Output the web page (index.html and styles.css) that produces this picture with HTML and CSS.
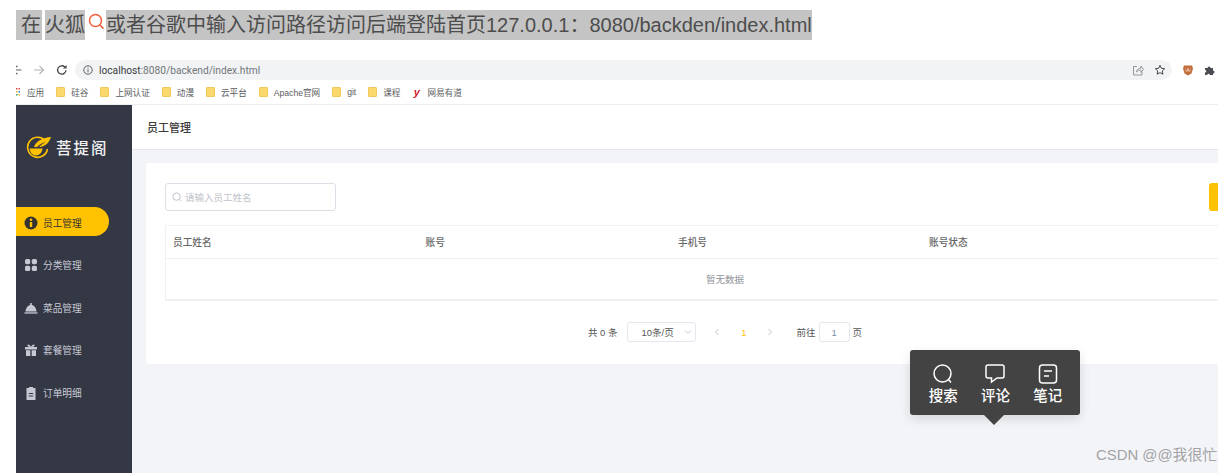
FILE: index.html
```html
<!DOCTYPE html>
<html lang="zh">
<head>
<meta charset="utf-8">
<title>员工管理</title>
<link rel="stylesheet" href="styles.css">
</head>
<body>
<div class="shot">
  <p class="note"><span class="hl first">在</span><span class="hl second">火狐</span><svg class="note-search" viewBox="0 0 18 18" width="18" height="18"><circle cx="8.5" cy="7.5" r="6" fill="none" stroke="#f0603c" stroke-width="1.5"/><path d="M12.8 11.8l3.6 3.8" stroke="#f0603c" stroke-width="1.6" fill="none"/></svg><span class="hl third">或者谷歌中输入访问路径访问后端登陆首页127.0.0.1：8080/backden/index.html</span></p>

  <div class="browser">
    <div class="toolbar">
      <div class="nav-btns">
        <svg class="back" viewBox="0 0 6 12" width="6" height="12"><path d="M0 6h5.5M0 3.2v0M0 8.8v0M0 3l1.5-1.2M0 9l1.5 1.2" stroke="#5f6368" stroke-width="1.2" fill="none"/></svg>
        <svg class="forward" viewBox="0 0 12 12" width="12" height="12"><path d="M1 6h9.5M6.5 2l4 4-4 4" stroke="#b4b6b9" stroke-width="1.2" fill="none"/></svg>
        <svg class="reload" viewBox="0 0 12 12" width="12" height="12"><path d="M10 6.2A4.2 4.2 0 1 1 8.8 3" stroke="#45484c" stroke-width="1.3" fill="none"/><path d="M10.6 1v3.6H7z" fill="#45484c"/></svg>
      </div>
      <div class="url">
        <svg class="info" viewBox="0 0 10 10" width="10" height="10"><circle cx="5" cy="5" r="4.2" fill="none" stroke="#5f6368" stroke-width="1"/><path d="M5 4.4v3M5 2.5v1" stroke="#5f6368" stroke-width="1"/></svg>
        <span class="url-text"><b>localhost</b>:8080/backend/index.html</span>
        <svg class="share" viewBox="0 0 12 12" width="12" height="12"><path d="M5 2.5H1.5v8.5h8.5V8M4.5 8c.4-2.6 2-3.8 4.5-3.8V2l2.5 3.4L9 8.4V6.2C7 6.2 5.600 6.700 4.500 8z" fill="none" stroke="#8a8d91" stroke-width=".9"/></svg>
        <svg class="star" viewBox="0 0 12 12" width="12" height="12"><path d="M6 1.300l1.400 3 3.300.4-2.400 2.200.6 3.300L6 8.600l-2.900 1.600.6-3.300L1.300 4.700l3.300-.4z" fill="none" stroke="#45484c" stroke-width="1"/></svg>
      </div>
      <svg class="lion" viewBox="0 0 12 12" width="12" height="12"><path d="M2 1.500h8l1 3-1.500 5L6 11.500 2.500 9.500 1 4.500z" fill="#c0703c"/><rect x="3.500" y="4" width="5" height="3.500" fill="#e9b48c"/><circle cx="4.500" cy="5" r=".8" fill="#c8392c"/><circle cx="7.500" cy="5" r=".8" fill="#c8392c"/></svg>
      <svg class="puzzle" viewBox="0 0 12 12" width="12" height="12"><path d="M1 4h2.500a1.500 1.500 0 1 1 3 0H9v2.500a1.500 1.500 0 1 1 0 3V11H5.800a1.300 1.300 0 1 0-2.600 0H1V8.500a1.300 1.300 0 1 0 0-2.600z" fill="#4a4d51"/></svg>
    </div>

    <div class="bookmarks">
      <div class="bm bm-apps">
        <svg viewBox="0 0 6 10" width="6" height="10"><rect width="1.500" height="1.500" y="1" fill="#e04b3c"/><rect x="2.500" y="1" width="1.500" height="1.500" fill="#e04b3c"/><rect y="4" width="1.500" height="1.500" fill="#f0b429"/><rect x="2.500" y="4" width="1.500" height="1.500" fill="#3b82e0"/><rect y="7" width="1.500" height="1.500" fill="#3fa45b"/><rect x="2.500" y="7" width="1.500" height="1.500" fill="#f0b429"/></svg>
        <span>应用</span>
      </div>
      <div class="bm"><i class="folder"></i><span>硅谷</span></div>
      <div class="bm"><i class="folder"></i><span>上网认证</span></div>
      <div class="bm"><i class="folder"></i><span>动漫</span></div>
      <div class="bm"><i class="folder"></i><span>云平台</span></div>
      <div class="bm"><i class="folder"></i><span>Apache官网</span></div>
      <div class="bm"><i class="folder"></i><span>git</span></div>
      <div class="bm"><i class="folder"></i><span>课程</span></div>
      <div class="bm"><b class="youdao">y</b><span>网易有道</span></div>
    </div>

    <div class="app">
      <aside class="sidebar">
        <div class="logo">
          <svg viewBox="0 0 28 24" width="28" height="24"><path d="M20 5.500A10 10 0 1 0 22.500 14" fill="none" stroke="#ffc200" stroke-width="1.600"/><path d="M9 12C11 6 18 2.500 26 2c-1.500 5-5 9.500-12 10 2-2 4-3.500 7-5.500-4 1.500-7 3.500-9 5.500z" fill="#ffc200"/><path d="M4.500 13.500h13c-.5 4-3 7-6.500 7s-6-3-6.500-7z" fill="#ffc200"/></svg>
          <span>菩提阁</span>
        </div>
        <nav class="menu">
          <a class="item active">
            <svg viewBox="0 0 14 14" width="14" height="14"><circle cx="7" cy="7" r="6.500" fill="#333"/><circle cx="7" cy="3.800" r="1.300" fill="#ffc200"/><path d="M5.800 6h2.400v5H5.800z" fill="#ffc200"/></svg>
            <span>员工管理</span>
          </a>
          <a class="item">
            <svg viewBox="0 0 14 14" width="14" height="14"><rect x="1" y="1" width="5.200" height="5.200" rx="1.600"/><rect x="7.800" y="1" width="5.200" height="5.200" rx="1.600"/><rect x="1" y="7.800" width="5.200" height="5.200" rx="1.600"/><rect x="7.800" y="7.800" width="5.200" height="5.200" rx="1.600"/></svg>
            <span>分类管理</span>
          </a>
          <a class="item">
            <svg viewBox="0 0 14 14" width="14" height="14"><path d="M1.500 10.500C2 6.500 4 4 7 4s5 2.500 5.500 6.500z"/><circle cx="7" cy="3" r="1.100"/><rect x="0.500" y="11.300" width="13" height="1.300"/></svg>
            <span>菜品管理</span>
          </a>
          <a class="item">
            <svg viewBox="0 0 14 14" width="14" height="14"><rect x="1" y="4" width="12" height="2.500"/><path d="M2 7.300h4.300V13H2zM7.700 7.300H12V13H7.700z"/><path d="M7 4C5.500 1 3 1 3.500 2.800 3.800 3.700 5.500 4 7 4c1.500 0 3.200-.3 3.500-1.200C11 1 8.500 1 7 4z"/></svg>
            <span>套餐管理</span>
          </a>
          <a class="item">
            <svg viewBox="0 0 14 14" width="14" height="14"><path fill-rule="evenodd" d="M2.500 2H5V1h4v1h2.500v12h-9zM4.800 7h4.400v1H4.800zm0 2.500h4.400v1H4.800z"/></svg>
            <span>订单明细</span>
          </a>
        </nav>
      </aside>

      <main class="main">
        <header class="page-head">员工管理</header>
        <section class="card">
          <div class="filters">
            <div class="search">
              <svg viewBox="0 0 10 10" width="10" height="10"><circle cx="4.600" cy="4.600" r="3.700" fill="none" stroke="#c0c4cc" stroke-width="1"/><path d="M7.300 7.300l2 2" stroke="#c0c4cc" stroke-width="1"/></svg>
              <span>请输入员工姓名</span>
            </div>
            <div class="add-btn"></div>
          </div>
          <div class="table">
            <div class="row head">
              <span>员工姓名</span><span>账号</span><span>手机号</span><span>账号状态</span>
            </div>
            <div class="empty">暂无数据</div>
          </div>
          <div class="pager">
            <span class="total">共 0 条</span>
            <div class="select"><span>10条/页</span><svg viewBox="0 0 8 8" width="8" height="8"><path d="M1 2.500l3 3 3-3" fill="none" stroke="#c0c4cc" stroke-width=".9"/></svg></div>
            <svg class="arrow" viewBox="0 0 8 8" width="8" height="8"><path d="M5.500 1l-3 3 3 3" fill="none" stroke="#c0c4cc" stroke-width="1"/></svg>
            <span class="current">1</span>
            <svg class="arrow" viewBox="0 0 8 8" width="8" height="8"><path d="M2.500 1l3 3-3 3" fill="none" stroke="#c0c4cc" stroke-width="1"/></svg>
            <span class="goto">前往</span>
            <div class="page-input">1</div>
            <span>页</span>
          </div>
        </section>
      </main>
    </div>

    <div class="popup">
      <div class="pop-item">
        <svg viewBox="0 0 22 22" width="22" height="22"><circle cx="10.500" cy="10.500" r="8.500" fill="none" stroke="#fff" stroke-width="1.500"/><path d="M16.500 16.500l2.500 3" stroke="#fff" stroke-width="1.500"/></svg>
        <span>搜索</span>
      </div>
      <div class="pop-item">
        <svg viewBox="0 0 22 22" width="22" height="22"><path d="M4 2h14a2 2 0 0 1 2 2v9a2 2 0 0 1-2 2h-5l-5.500 4v-4H4a2 2 0 0 1-2-2V4a2 2 0 0 1 2-2z" fill="none" stroke="#fff" stroke-width="1.500"/></svg>
        <span>评论</span>
      </div>
      <div class="pop-item">
        <svg viewBox="0 0 22 22" width="22" height="22"><rect x="2.500" y="2" width="17" height="18" rx="3" fill="none" stroke="#fff" stroke-width="1.500"/><path d="M7 8h8M7 13h5" stroke="#fff" stroke-width="1.500"/></svg>
        <span>笔记</span>
      </div>
    </div>
    <div class="watermark">CSDN @@我很忙</div>
  </div>
</div>
</body>
</html>
```
FILE: styles.css
```css
* { box-sizing: border-box; }
html, body { margin: 0; height: 100%; background: #fff; overflow: hidden; }
body { font-family: "Liberation Sans", "Noto Sans CJK SC", sans-serif; color: #333; }
.shot { width: 1218px; height: 473px; padding: 10px 0 0 16px; overflow: hidden; position: relative; }

.note { margin: 0; height: 30px; display: flex; align-items: center; font-size: 20px; line-height: 30px; color: #4d4d4d; white-space: nowrap; }
.hl { background: #c4c4c4; height: 30px; display: block; }
.first { width: 26px; padding-left: 5px; }
.second { width: 40px; margin-left: 3px; }
.note-search { margin: 0 1px 7px 2px; flex: none; }
.third { width: 706px; }

.browser { margin-top: 20px; width: 1202px; }
.toolbar { height: 20px; display: flex; align-items: center; }
.nav-btns { width: 59px; display: flex; align-items: center; flex: none; }
.back { margin-right: 11px; }
.forward { margin-right: 11px; }
.url { width: 1097px; height: 20px; background: #f1f3f4; border-radius: 10px; display: flex; align-items: center; padding-left: 8px; flex: none; }
.info { margin-right: 6px; flex: none; }
.url-text { font-family: Roboto, "Liberation Sans", sans-serif; font-size: 10.2px; color: #72767a; white-space: nowrap; }
.url-text b { font-weight: 400; color: #3a3c3f; }
.share { margin-left: auto; }
.star { margin: 0 6px 0 10px; }
.lion { margin-left: 10px; }
.puzzle { margin-left: 10px; }

.bookmarks { height: 24px; padding-top: 4px; padding-bottom: 4px; display: flex; align-items: center; gap: 12px; font-size: 8.6px; color: #5a5c60; white-space: nowrap; }
.bm { display: flex; align-items: center; gap: 6px; }
.bm-apps { gap: 5px; }
.folder { width: 9px; height: 10px; background: #fbd96e; border: 1px solid #f3c85a; border-radius: 1px; display: block; }
.youdao { width: 9px; font-family: "Liberation Sans", sans-serif; font-style: italic; font-size: 11px; line-height: 10px; color: #d3202e; text-align: center; }

.app { height: 369px; display: flex; border-top: 1px solid #eceef0; }
.sidebar { width: 116px; background: #343744; flex: none; padding-top: 28px; }
.logo { height: 28px; padding-left: 9px; display: flex; align-items: center; gap: 3px; }
.logo span { font-family: "Noto Sans CJK SC", sans-serif; font-size: 15.5px; font-weight: 500; letter-spacing: 2px; color: #f2f2f2; }
.menu { margin-top: 46px; display: flex; flex-direction: column; gap: 13.500px; width: 93px; }
.item { height: 29px; display: flex; align-items: center; gap: 5px; padding-left: 8px; padding-top: 2px; font-size: 9.7px; color: #c6c9d4; border-radius: 0 15px 15px 0; white-space: nowrap; }
.item svg { fill: #c6c9d4; flex: none; }
.item.active { background: #ffc200; color: #333; }

.main { flex: 1; min-width: 0; background: #f3f4f7; overflow: hidden; }
.page-head { height: 45px; padding-left: 15px; background: #fff; border-bottom: 1px solid #e6e7ea; display: flex; align-items: center; font-size: 11px; font-weight: 500; color: #3c3c3c; }
.card { width: 1158px; height: 201px; margin: 13px 0 0 14px; background: #fff; border-radius: 3px; padding: 20px 19px 0; }
.filters { display: flex; justify-content: space-between; }
.search { width: 171px; height: 28px; border: 1px solid #dcdfe6; border-radius: 3px; display: flex; align-items: center; gap: 3px; padding-left: 6px; font-size: 9.500px; color: #c0c4cc; }
.add-btn { width: 76px; height: 28px; background: #ffc200; border-radius: 3px; }
.table { margin-top: 14px; border: 1px solid #f0f1f4; border-bottom-width: 2px; }
.row { height: 33px; display: grid; grid-template-columns: 252.500px 252.500px 251px 252px; align-items: center; border-bottom: 1px solid #eff0f4; font-size: 9.700px; font-weight: 500; color: #666; }
.row span { padding-left: 7px; }
.empty { height: 40px; display: flex; align-items: center; justify-content: center; font-size: 9.500px; color: #909399; }
.pager { margin-top: 21px; height: 20px; display: flex; justify-content: center; align-items: center; font-size: 9.500px; color: #555; }
.select { width: 69px; height: 20px; margin-left: 9px; border: 1px solid #e4e7ed; border-radius: 3px; display: flex; align-items: center; justify-content: space-between; padding: 0 3px 0 14px; }
.arrow { margin-left: 17px; }
.current { width: 19px; margin-left: 14px; text-align: center; color: #ffc200; }
.current + .arrow { margin-left: 12px; }
.goto { margin-left: 23px; }
.page-input { width: 31px; height: 20px; margin: 0 3px; border: 1px solid #e4e7ed; border-radius: 3px; display: flex; align-items: center; justify-content: center; color: #7f8fa8; }

.popup { position: absolute; left: 910px; top: 350px; width: 170px; height: 65px; background: #434343; border-radius: 3px; box-shadow: 0 4px 12px rgba(0, 0, 0, .12); display: flex; padding: 13px 6px 0 7px; }
.popup::after { content: ""; position: absolute; left: 74px; bottom: -10px; border-style: solid; border-width: 10px 10px 0; border-color: #434343 transparent transparent; }
.pop-item { width: 52.500px; display: flex; flex-direction: column; align-items: center; color: #fff; font-family: "Noto Sans CJK SC", sans-serif; font-size: 14.500px; font-weight: 500; line-height: 20px; }
.pop-item svg { display: block; }
.watermark { position: absolute; left: 1096px; top: 446px; font-size: 14.900px; line-height: 18px; color: #a3a3a6; white-space: nowrap; }
```
